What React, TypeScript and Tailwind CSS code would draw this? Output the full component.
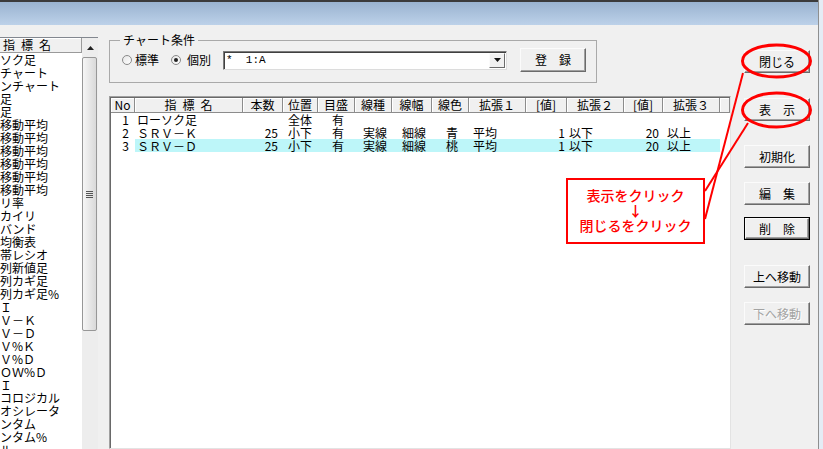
import React from "react";

const LIST = [
  "ソク足",
  "チャート",
  "ンチャート",
  "足",
  "足",
  "移動平均",
  "移動平均",
  "移動平均",
  "移動平均",
  "移動平均",
  "移動平均",
  "リ率",
  "カイリ",
  "バンド",
  "均衡表",
  "帯レシオ",
  "列新値足",
  "列カギ足",
  "列カギ足%",
  "Ｉ",
  "Ｖ－Ｋ",
  "Ｖ－Ｄ",
  "Ｖ%Ｋ",
  "Ｖ%Ｄ",
  "ＯＷ%Ｄ",
  "Ｉ",
  "コロジカル",
  "オシレータ",
  "ンタム",
  "ンタム%",
  "ルー",
];

const COLS = [
  { h: "No", w: "w-[24px]", c: "justify-end pr-[6px]" },
  { h: "指\u2002標\u2002名", w: "w-[108px]", c: "pl-[2px]" },
  { h: "本数", w: "w-[40px]", c: "justify-end pr-[5px]" },
  { h: "位置", w: "w-[35px]", c: "pl-[5px]" },
  { h: "目盛", w: "w-[37px]", c: "pl-[14px]" },
  { h: "線種", w: "w-[37px]", c: "pl-[8px]" },
  { h: "線幅", w: "w-[40px]", c: "pl-[10px]" },
  { h: "線色", w: "w-[37px]", c: "pl-[14px]" },
  { h: "拡張１", w: "w-[57px]", c: "pl-[4px]" },
  { h: "[値]", w: "w-[41px]", c: "justify-end pr-[2px]" },
  { h: "拡張２", w: "w-[57px]", c: "pl-[2px]" },
  { h: "[値]", w: "w-[39px]", c: "justify-end pr-[4px]" },
  { h: "拡張３", w: "w-[57px]", c: "pl-[4px]" },
];

const ROWS = [
  { sel: false, cells: ["1", "ローソク足", "", "全体", "有", "", "", "", "", "", "", "", ""] },
  { sel: false, cells: ["2", "ＳＲＶ－Ｋ", "25", "小下", "有", "実線", "細線", "青", "平均", "1", "以下", "20", "以上"] },
  { sel: true, cells: ["3", "ＳＲＶ－Ｄ", "25", "小下", "有", "実線", "細線", "桃", "平均", "1", "以下", "20", "以上"] },
];

function Btn({ label, def, off, className = "" }: { label: string; def?: boolean; off?: boolean; className?: string }) {
  const inner = (
    <div
      className={`flex h-full w-full items-center justify-center border border-t-[#fbfbfb] border-l-[#fbfbfb] border-r-[#6b6b6b] border-b-[#6b6b6b] bg-[#f0f0f0] leading-none shadow-[inset_-1px_-1px_0_#a0a0a0] ${
        off ? "text-[#a3a3a3] [text-shadow:1px_1px_0_#fff]" : "text-black"
      }`}
    >
      {label}
    </div>
  );
  return (
    <div className={`h-[23px] w-[66px] flex-none ${def ? "border border-black" : ""} ${className}`}>{inner}</div>
  );
}

export default function App() {
  return (
    <div className="relative h-[449px] w-[823px] overflow-hidden bg-[#e4ecf5] font-['Noto_Sans_CJK_JP','Noto_Sans',sans-serif] text-[12px] text-black">
      <div className="flex h-full w-[819px] flex-col border-r border-[#8e8f8f]">
        <div className="h-[2px] flex-none bg-[#3b3b3b]" />
        <div className="h-[23px] flex-none bg-gradient-to-b from-[#9ab3d0] to-[#bcd1e9]" />

        <div className="flex min-h-0 flex-1 overflow-hidden bg-[#f0f0f0]">
          {/* indicator list */}
          <div className="flex w-[109px] flex-none flex-col pt-[12px]">
            <div className="flex min-h-0 w-[98px] flex-1 overflow-hidden border-t border-[#82878f] bg-white">
              <div className="w-[82px] flex-none overflow-hidden">
                <div className="h-[15px] whitespace-pre border-r border-b border-[#9a9a9a] bg-[#f0f0f0] pl-[3px] leading-[14px] shadow-[inset_0_1px_0_#fff]">
                  {"指\u2002標\u2002名"}
                </div>
                {LIST.map((t, i) => (
                  <div key={i} className="h-[13px] overflow-hidden whitespace-nowrap leading-[13px]">
                    {t}
                  </div>
                ))}
              </div>
              <div className="flex w-[16px] flex-none flex-col bg-[#ededed]">
                <div className="flex h-[19px] flex-none items-center justify-center">
                  <svg width="7" height="4" viewBox="0 0 7 4">
                    <path d="M3.5 0 L7 4 L0 4 Z" fill="#222" />
                  </svg>
                </div>
                <div className="flex h-[274px] w-[15px] flex-none items-center justify-center rounded-[2px] border border-[#979797] bg-gradient-to-r from-[#f6f6f6] to-[#d9d9d9]">
                  <div className="flex flex-col gap-[1px]">
                    <div className="h-[1px] w-[7px] bg-[#555]" />
                    <div className="h-[1px] w-[7px] bg-[#555]" />
                    <div className="h-[1px] w-[7px] bg-[#555]" />
                    <div className="h-[1px] w-[7px] bg-[#555]" />
                  </div>
                </div>
              </div>
            </div>
          </div>

          {/* middle */}
          <div className="flex w-[622px] flex-none flex-col pt-[8px]">
            <fieldset className="w-[488px] border border-[#a9a9a9] px-[10px] pb-[9px]">
              <legend className="px-[3px] leading-[14px]">チャート条件</legend>
              <div className="flex h-[26px] items-center">
                <span className="ml-[2px] h-[10px] w-[10px] rounded-full border border-[#8a8a8a] bg-gradient-to-br from-[#e6e6e6] to-white" />
                <span className="ml-[3px] leading-none">標準</span>
                <span className="ml-[12px] flex h-[10px] w-[10px] items-center justify-center rounded-full border border-[#8a8a8a] bg-gradient-to-br from-[#e6e6e6] to-white">
                  <span className="h-[4px] w-[4px] rounded-full bg-[#222]" />
                </span>
                <span className="ml-[6px] leading-none">個別</span>
                <div className="ml-[12px] flex h-[19px] w-[284px] items-center border border-t-[#7a7a7a] border-l-[#7a7a7a] border-r-[#dcdcdc] border-b-[#dcdcdc] bg-white shadow-[inset_1px_1px_0_#404040]">
                  <span className="flex-1 whitespace-pre pl-[2px] font-['Liberation_Mono',monospace] text-[11px] leading-none">
                    {"*  1:A"}
                  </span>
                  <div className="mr-[1px] flex h-[15px] w-[16px] items-center justify-center border border-t-[#fbfbfb] border-l-[#fbfbfb] border-r-[#6b6b6b] border-b-[#6b6b6b] bg-[#f0f0f0]">
                    <svg width="7" height="4" viewBox="0 0 7 4">
                      <path d="M0 0 L7 0 L3.5 4 Z" fill="#111" />
                    </svg>
                  </div>
                </div>
                <Btn label="登　録" className="ml-[13px] h-[24px] w-[65px]" />
              </div>
            </fieldset>

            {/* table */}
            <div className="mt-[13px] flex min-h-0 flex-1 flex-col overflow-hidden border border-t-[#a0a0a0] border-l-[#a0a0a0] border-r-[#e3e3e3] border-b-[#e3e3e3] bg-white shadow-[inset_1px_1px_0_#696969]">
              <div className="mt-[1px] ml-[1px] flex h-[15px] flex-none">
                {COLS.map((c, i) => (
                  <div
                    key={i}
                    className={`${c.w} flex flex-none items-center justify-center whitespace-pre border-r border-b border-[#8c8c8c] bg-[#f0f0f0] leading-none shadow-[inset_1px_1px_0_#fff]`}
                  >
                    {c.h}
                  </div>
                ))}
                <div className="flex-1 border-r border-b border-[#8c8c8c] bg-[#f0f0f0] shadow-[inset_1px_1px_0_#fff]" />
              </div>
              {ROWS.map((r, ri) => (
                <div key={ri} className="ml-[1px] flex h-[13px] flex-none">
                  {COLS.map((c, ci) => (
                    <div
                      key={ci}
                      className={`${c.w} ${c.c} flex flex-none items-center whitespace-nowrap leading-[13px] ${
                        r.sel && ci > 0 ? "bg-[#bdf6f9]" : ""
                      }`}
                    >
                      {r.cells[ci]}
                    </div>
                  ))}
                </div>
              ))}
            </div>
          </div>

          {/* buttons */}
          <div className="flex flex-none flex-col pt-[25px] pl-[13px]">
            <Btn label="閉じる" />
            <Btn label="表　示" className="mt-[25px]" />
            <Btn label="初期化" className="mt-[24px]" />
            <Btn label="編　集" className="mt-[14px]" />
            <Btn label="削　除" def className="mt-[12px]" />
            <Btn label="上へ移動" className="mt-[25px]" />
            <Btn label="下へ移動" off className="mt-[14px]" />
          </div>
        </div>
      </div>

      {/* red annotations */}
      <svg className="pointer-events-none absolute inset-0" width="823" height="449" viewBox="0 0 823 449">
        <ellipse cx="776.5" cy="61" rx="34" ry="16" fill="none" stroke="#ff0000" strokeWidth="3" />
        <ellipse cx="776.5" cy="110" rx="34" ry="17" fill="none" stroke="#ff0000" strokeWidth="3" />
        <line x1="743" y1="73" x2="705" y2="219" stroke="#ff0000" strokeWidth="2" />
        <line x1="748" y1="123" x2="705" y2="191" stroke="#ff0000" strokeWidth="2" />
      </svg>
      <div className="absolute left-[566px] top-[178px] flex h-[66px] w-[139px] flex-col items-center border-2 border-[#ff0000] bg-white pt-[7px] text-[14px] font-medium text-[#ff0000]">
        <div className="leading-[16px]">表示をクリック</div>
        <div className="text-[14px] font-bold leading-[14px]">↓</div>
        <div className="leading-[16px]">閉じるをクリック</div>
      </div>
    </div>
  );
}
